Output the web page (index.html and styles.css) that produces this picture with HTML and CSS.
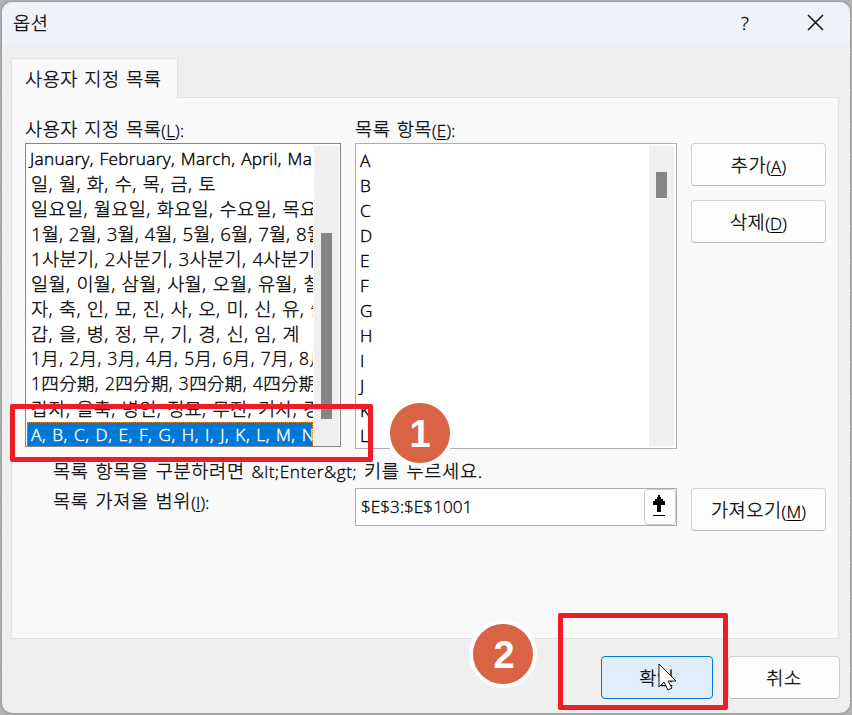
FILE: index.html
```html
<!DOCTYPE html>
<html lang="ko">
<head>
<meta charset="utf-8">
<title>옵션</title>
<link rel="stylesheet" href="styles.css">
</head>
<body>
<main class="dialog">
  <header class="titlebar">
    <h1>옵션</h1>
    <span class="help">?</span>
    <svg class="close" width="17" height="17" viewBox="0 0 17 17"><path d="M1 1 16 16M16 1 1 16"/></svg>
  </header>
  <div class="tab">사용자 지정 목록</div>
  <section class="panel">
    <div class="lists">
      <div class="field">
        <label>사용자 지정 목록<span class="key">(<u>L</u>):</span></label>
        <div class="listbox custom">
          <ul>
            <li class="months">January, February, March, April, Ma</li>
            <li>일, 월, 화, 수, 목, 금, 토</li>
            <li>일요일, 월요일, 화요일, 수요일, 목요</li>
            <li class="digit">1월, 2월, 3월, 4월, 5월, 6월, 7월, 8월</li>
            <li>1사분기, 2사분기, 3사분기, 4사분기</li>
            <li>일월, 이월, 삼월, 사월, 오월, 유월, 칠</li>
            <li>자, 축, 인, 묘, 진, 사, 오, 미, 신, 유, 술</li>
            <li>갑, 을, 병, 정, 무, 기, 경, 신, 임, 계</li>
            <li class="hanja">1月, 2月, 3月, 4月, 5月, 6月, 7月, 8月</li>
            <li class="hanja">1四分期, 2四分期, 3四分期, 4四分期</li>
            <li>갑자, 을축, 병인, 정묘, 무진, 기사, 경</li>
            <li class="selected">A, B, C, D, E, F, G, H, I, J, K, L, M, N</li>
          </ul>
          <div class="scroll"><i></i></div>
        </div>
      </div>
      <div class="field">
        <label>목록 항목<span class="key">(<u>E</u>):</span></label>
        <div class="listbox entries">
          <ul>
            <li>A</li><li>B</li><li>C</li><li>D</li><li>E</li><li>F</li>
            <li>G</li><li>H</li><li>I</li><li>J</li><li>K</li><li>L</li>
          </ul>
          <div class="scroll"><i></i></div>
        </div>
      </div>
      <div class="actions">
        <button>추가<span class="key">(<u>A</u>)</span></button>
        <button>삭제<span class="key">(<u>D</u>)</span></button>
      </div>
    </div>
    <p class="hint">목록 항목을 구분하려면 <span class="entity">&amp;lt;Enter&amp;gt;</span> 키를 누르세요.</p>
    <div class="import">
      <label>목록 가져올 범위<span class="key">(<u>I</u>):</span></label>
      <div class="range"><span>$E$3:$E$1001</span>
        <div class="picker"><svg width="14" height="22" viewBox="0 0 14 22" shape-rendering="crispEdges"><path d="M6 0h2v2h1v2h2v2h2v4H9v7H5v-7H1V6h2V4h2V2h1zM1 20h12v1H1z"/></svg></div>
      </div>
      <button>가져오기<span class="key">(<u>M</u>)</span></button>
    </div>
  </section>
  <footer>
    <button class="ok">확인</button>
    <button class="cancel">취소</button>
  </footer>
</main>
<div class="mark mark-list"></div>
<div class="mark mark-ok"></div>
<div class="step step-one">1</div>
<div class="step step-two">2</div>
<svg class="cursor" width="20" height="29" viewBox="0 0 20 29"><path d="M1 1v23l5-5 4 8 4-2-4-7h8z"/></svg>
</body>
</html>
```
FILE: styles.css
```css
* { box-sizing: border-box; }
body {
  margin: 0;
  padding: 2px;
  width: 852px;
  height: 715px;
  overflow: hidden;
  position: relative;
  background: repeating-linear-gradient(#b2b2b2 0 33px, #9d9d9d 33px 34px) 0 -13px;
  font: 18.67px/25px "Open Sans", "Noto Sans CJK KR", sans-serif;
  color: #000;
}
.dialog {
  height: 711px;
  border-radius: 10px;
  background: #efefef;
  box-shadow: 0 0 2px 1px #999;
  overflow: hidden;
}
.titlebar {
  display: flex;
  height: 43px;
  background: #eef3f9;
}
h1 {
  flex: 1;
  margin: 7px 0 0 11px;
  font: 300 18.67px/25px "Noto Sans CJK KR", sans-serif;
  letter-spacing: .5px;
  -webkit-text-stroke: .3px;
}
.help { width: 10px; margin: 8px 56px 0 0; font-weight: 300; -webkit-text-stroke: .3px; }
.close { margin: 12px 26px 0 0; fill: none; stroke: #111; stroke-width: 1.5; }
.tab {
  position: relative;
  width: 167px;
  height: 40px;
  margin: 13px 0 -1px 9px;
  padding: 7px 13px;
  border: 1px solid #e2e2e2;
  border-bottom: 0;
  background: #f9f9f9;
}
.tab, label, .hint, button, li, .range {
  font-weight: 300;
  letter-spacing: .5px;
  word-spacing: 1px;
  white-space: nowrap;
  -webkit-text-stroke: .3px;
}
.panel {
  height: 542px;
  width: 828px;
  margin-left: 9px;
  padding: 20px 0 0 13px;
  border: 1px solid #e2e2e2;
  background: #f9f9f9;
}
.lists { display: grid; grid-template-columns: 316px 322px 135px; gap: 14px; }
label { display: block; height: 25px; }
.lists label { line-height: 22px; }
.key { font-size: 17px; letter-spacing: .2px; line-height: 1; vertical-align: -1px; }
u { text-underline-offset: 2px; text-decoration-thickness: 1px; }
.listbox { display: flex; border: 1px solid #828790; background: #fff; overflow: hidden; }
ul { list-style: none; margin: 0; padding: 3px 0 0; overflow: hidden; }
li { height: 25px; padding-left: 4px; font-size: 18.67px; line-height: 23px; letter-spacing: .3px; }
li.digit { letter-spacing: .05px; }
li.hanja { font-size: 17.4px; letter-spacing: .43px; }
.custom { height: 304px; padding-left: 1px; }
.custom ul { width: 286px; }
.entries { height: 306px; border-color: #abadb3; }
.entries ul { width: 293px; padding-top: 4px; }
.entries li, .months, .selected { font-size: 17.2px; line-height: 25px; -webkit-text-stroke: .4px; }
.custom .months { padding-left: 3px; letter-spacing: .33px; line-height: 24px; }
.selected { height: 25px; background: #0078d7; color: #fff; letter-spacing: .58px; outline: 1px dotted #f28a22; outline-offset: -1px; }
.scroll { width: 25px; height: 300px; margin: 2px 0 0 1px; padding: 87px 0 0 7px; background: #efefef; }
.scroll i { display: block; width: 11px; height: 186px; background: #858585; }
.entries .scroll { padding-top: 26px; margin-left: 0; }
.entries .scroll i { height: 26px; }
button {
  display: block;
  width: 135px;
  height: 43px;
  padding: 0;
  border: 1px solid #cfcfcf;
  border-bottom-color: #bbb;
  border-radius: 4px;
  background: #fdfdfd;
  color: #000;
  font-family: inherit;
  font-size: 18.67px;
  line-height: 25px;
}
.actions { display: flex; flex-direction: column; gap: 14px; padding-top: 25px; }
.hint { margin: 9px 0 0 28px; height: 25px; letter-spacing: .65px; word-spacing: 1.3px; }
.entity { font-size: 17.2px; letter-spacing: .55px; }
.import { display: flex; margin-top: 5px; }
.import label { width: 302px; margin-left: 28px; letter-spacing: .7px; }
.range { display: flex; justify-content: space-between; width: 322px; height: 38px; border: 1px solid #abadb3; background: #fff; font-size: 17.2px; line-height: 35px; padding-left: 5px; letter-spacing: 0; }
.picker { width: 32px; height: 36px; border: 1px solid #ccc; border-radius: 4px; padding: 5px 7px; }
.picker svg { display: block; }
.import button { margin-left: 14px; }
footer { display: flex; gap: 15px; margin: 17px 0 0 599px; }
footer button { width: 112px; }
footer .ok { border-color: #0078d4; background: #e0eef9; }
.mark { position: absolute; border: 5px solid #ee1c25; border-radius: 2px; }
.mark-list { left: 10px; top: 404px; width: 363px; height: 58px; }
.mark-ok { left: 558px; top: 613px; width: 170px; height: 97px; }
.step {
  position: absolute;
  width: 68px;
  height: 68px;
  border: 4px solid #fff;
  border-radius: 50%;
  background: #d96445;
  color: #fff;
  font: bold 38px/62px "Liberation Sans", sans-serif;
  text-align: center;
}
.step-one { left: 386px; top: 399px; }
.step-two { left: 469px; top: 620px; padding-left: 2px; }
.cursor { position: absolute; left: 658px; top: 663px; fill: #fff; stroke: #111; }
```
